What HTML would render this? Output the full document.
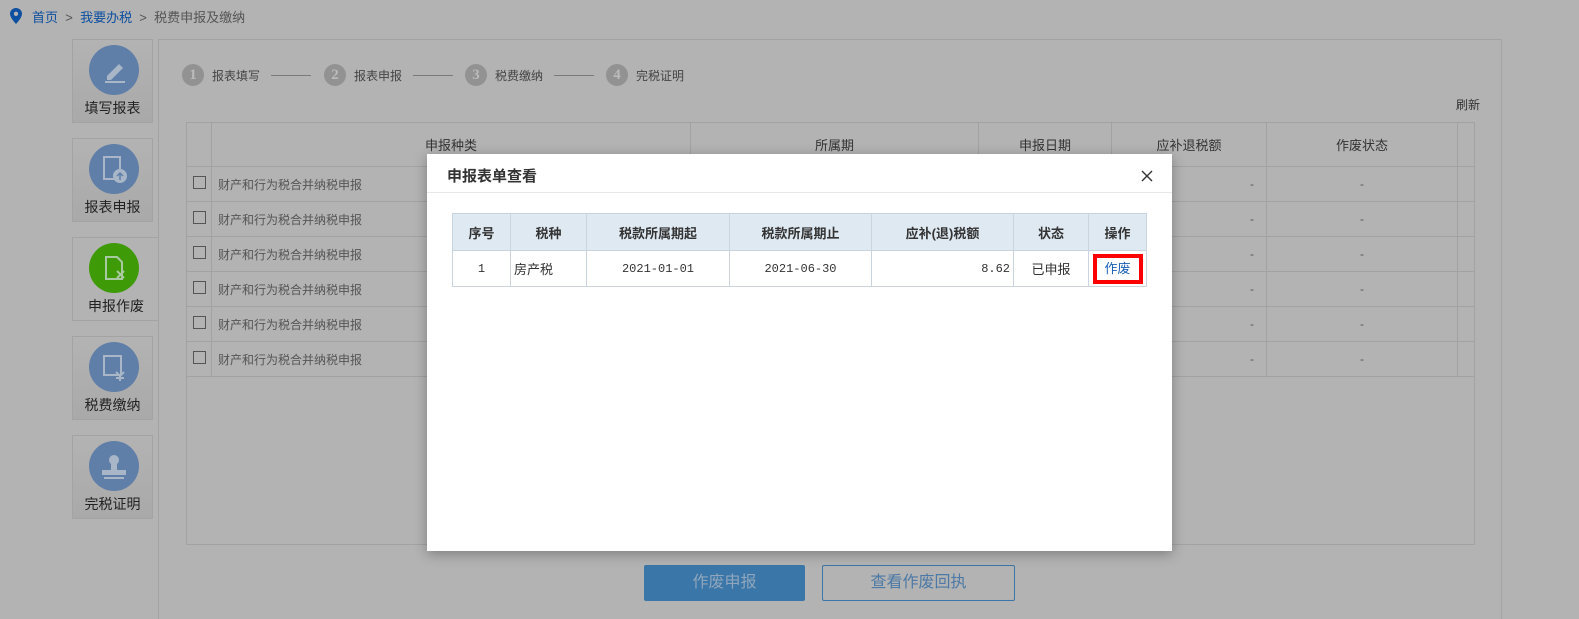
<!DOCTYPE html>
<html><head><meta charset="utf-8"><style>
*{box-sizing:border-box;margin:0;padding:0}
body{width:1579px;height:614px;background:#b3b3b3;font-family:"Liberation Sans","Noto Sans CJK SC",sans-serif;position:relative;overflow:hidden;color:#333}
.a{position:absolute}
.nav{position:absolute;left:72px;width:81px;height:84px;border:1px solid #a3a3a3;background:linear-gradient(#b3b3b3,#a9a9a9)}
.nav .c{position:absolute;left:16px;top:5px;width:50px;height:50px;border-radius:50%;background:#5f7fa8}
.nav .t{position:absolute;left:0;right:0;top:58px;text-align:center;font-size:14px;color:#222}
.tb{border-collapse:collapse;position:absolute}
.tb td{border:1px solid #a2a2a2;font-size:12px;color:#555}
.step{position:absolute;top:64px;width:22px;height:22px;border-radius:50%;background:#929292;color:#bbb;font:bold 15px "Liberation Serif",serif;text-align:center;line-height:22px}
.sl{position:absolute;top:75px;height:1px;background:#7a7a7a;width:40px}
.st{position:absolute;top:67px;font-size:12px;color:#444}
.m td{border:1px solid #c9d4df;font-size:12px;text-align:center;color:#333}
</style></head><body>
<svg class="a" style="left:10px;top:8px" width="12" height="16" viewBox="0 0 12 16"><path d="M6 0C2.7 0 0 2.6 0 5.8 0 10 6 16 6 16s6-6 6-10.2C12 2.6 9.3 0 6 0z" fill="#0d4fa0"/><circle cx="6" cy="5.8" r="2.2" fill="#b3b3b3"/></svg>
<div class="a" style="left:32px;top:7px;font-size:13px;color:#555"><span style="color:#0d4fa0">首页</span>&nbsp;&nbsp;&gt;&nbsp;&nbsp;<span style="color:#0d4fa0">我要办税</span>&nbsp;&nbsp;&gt;&nbsp;&nbsp;税费申报及缴纳</div>

<div class="nav" style="top:39px"><div class="c"><svg width="50" height="50"><path d="M18 31l12-12 4 4-12 12h-4z" fill="#a8b6c8"/><path d="M16 37h20" stroke="#a8b6c8" stroke-width="2"/></svg></div><div class="t">填写报表</div></div>
<div class="nav" style="top:138px"><div class="c"><svg width="50" height="50"><rect x="15" y="13" width="16" height="22" fill="none" stroke="#a8b6c8" stroke-width="2"/><circle cx="31" cy="32" r="7" fill="#a8b6c8"/><path d="M31 36v-7m-3 3l3-3 3 3" stroke="#5f7fa8" stroke-width="1.5" fill="none"/></svg></div><div class="t">报表申报</div></div>
<div class="nav" style="top:237px;width:87px;border-right:none;background:#b3b3b3"><div class="c" style="background:#3f9a08"><svg width="50" height="50"><path d="M17 14h11l5 5v17H17z" fill="none" stroke="#a9c9a0" stroke-width="2"/><path d="M28 28l7 7m0-7l-7 7" stroke="#a9c9a0" stroke-width="2"/></svg></div><div class="t">申报作废</div></div>
<div class="nav" style="top:336px"><div class="c"><svg width="50" height="50"><rect x="15" y="14" width="17" height="19" fill="none" stroke="#a8b6c8" stroke-width="2"/><path d="M27 30l4 4 4-4m-4 4v5m-4-3h8" stroke="#a8b6c8" stroke-width="2" fill="none"/></svg></div><div class="t">税费缴纳</div></div>
<div class="nav" style="top:435px"><div class="c"><svg width="50" height="50"><circle cx="25" cy="19" r="5" fill="#a8b6c8"/><rect x="22" y="23" width="6" height="6" fill="#a8b6c8"/><rect x="13" y="29" width="24" height="5" fill="#a8b6c8"/><rect x="15" y="36" width="20" height="2" fill="#a8b6c8"/></svg></div><div class="t">完税证明</div></div>

<div class="a" style="left:158px;top:39px;width:1344px;height:580px;border:1px solid #a3a3a3;border-bottom:none"></div>
<div class="step" style="left:182px">1</div><div class="st" style="left:212px">报表填写</div><div class="sl" style="left:271px"></div>
<div class="step" style="left:324px">2</div><div class="st" style="left:354px">报表申报</div><div class="sl" style="left:413px"></div>
<div class="step" style="left:465px">3</div><div class="st" style="left:495px">税费缴纳</div><div class="sl" style="left:554px"></div>
<div class="step" style="left:606px">4</div><div class="st" style="left:636px">完税证明</div>
<div class="a" style="left:1456px;top:96px;font-size:12px;color:#333">刷新</div>

<div class="a" style="left:186px;top:122px;width:1289px;height:423px;border:1px solid #a2a2a2"></div>
<table class="tb" style="left:186px;top:122px;width:1289px">
<tr style="height:44px"><td style="width:25px"></td><td style="width:479px;text-align:center;font-size:13px;color:#333">申报种类</td><td style="width:288px;text-align:center;font-size:13px;color:#333">所属期</td><td style="width:133px;text-align:center;font-size:13px;color:#333">申报日期</td><td style="width:155px;text-align:center;font-size:13px;color:#333">应补退税额</td><td style="width:191px;text-align:center;font-size:13px;color:#333">作废状态</td><td></td></tr>
<tr style="height:35px"><td style="text-align:center"><span style="display:inline-block;width:13px;height:13px;border:1px solid #555"></span></td><td style="padding-left:6px">财产和行为税合并纳税申报</td><td></td><td></td><td style="text-align:right;padding-right:12px">-</td><td style="text-align:center">-</td><td></td></tr>
<tr style="height:35px"><td style="text-align:center"><span style="display:inline-block;width:13px;height:13px;border:1px solid #555"></span></td><td style="padding-left:6px">财产和行为税合并纳税申报</td><td></td><td></td><td style="text-align:right;padding-right:12px">-</td><td style="text-align:center">-</td><td></td></tr>
<tr style="height:35px"><td style="text-align:center"><span style="display:inline-block;width:13px;height:13px;border:1px solid #555"></span></td><td style="padding-left:6px">财产和行为税合并纳税申报</td><td></td><td></td><td style="text-align:right;padding-right:12px">-</td><td style="text-align:center">-</td><td></td></tr>
<tr style="height:35px"><td style="text-align:center"><span style="display:inline-block;width:13px;height:13px;border:1px solid #555"></span></td><td style="padding-left:6px">财产和行为税合并纳税申报</td><td></td><td></td><td style="text-align:right;padding-right:12px">-</td><td style="text-align:center">-</td><td></td></tr>
<tr style="height:35px"><td style="text-align:center"><span style="display:inline-block;width:13px;height:13px;border:1px solid #555"></span></td><td style="padding-left:6px">财产和行为税合并纳税申报</td><td></td><td></td><td style="text-align:right;padding-right:12px">-</td><td style="text-align:center">-</td><td></td></tr>
<tr style="height:35px"><td style="text-align:center"><span style="display:inline-block;width:13px;height:13px;border:1px solid #555"></span></td><td style="padding-left:6px">财产和行为税合并纳税申报</td><td></td><td></td><td style="text-align:right;padding-right:12px">-</td><td style="text-align:center">-</td><td></td></tr>
</table>

<div class="a" style="left:644px;top:565px;width:161px;height:36px;background:#3a76a8;border-radius:2px;color:#8fa6bc;font-size:16px;text-align:center;line-height:36px">作废申报</div>
<div class="a" style="left:822px;top:565px;width:193px;height:36px;border:1px solid #3a76a8;border-radius:2px;color:#4c79a6;font-size:16px;text-align:center;line-height:34px">查看作废回执</div>

<div class="a" style="left:427px;top:154px;width:745px;height:397px;background:#fff;box-shadow:0 3px 12px rgba(0,0,0,.3)">
<div class="a" style="left:0;top:0;width:745px;height:39px;border-bottom:1px solid #e8e8e8"></div>
<div class="a" style="left:20px;top:11px;font-size:15px;font-weight:bold;color:#333">申报表单查看</div>
<svg class="a" style="left:714px;top:16px" width="12" height="12"><path d="M1 1l10 10M11 1L1 11" stroke="#333" stroke-width="1.4"/></svg>
<table class="m" style="position:absolute;left:25px;top:59px;border-collapse:collapse;width:695px">
<tr style="height:37px;background:#dfe9f2;font-weight:bold"><td style="width:58px;font-weight:bold;font-size:13px">序号</td><td style="width:76px;font-weight:bold;font-size:13px">税种</td><td style="width:143px;font-weight:bold;font-size:13px">税款所属期起</td><td style="width:142px;font-weight:bold;font-size:13px">税款所属期止</td><td style="width:142px;font-weight:bold;font-size:13px">应补(退)税额</td><td style="width:75px;font-weight:bold;font-size:13px">状态</td><td style="font-weight:bold;font-size:13px">操作</td></tr>
<tr style="height:36px"><td style="font-family:'Liberation Mono',monospace">1</td><td style="text-align:left;padding-left:3px;font-size:13px">房产税</td><td style="font-family:'Liberation Mono',monospace">2021-01-01</td><td style="font-family:'Liberation Mono',monospace">2021-06-30</td><td style="text-align:right;padding-right:3px;font-family:'Liberation Mono',monospace">8.62</td><td style="font-size:13px">已申报</td><td><span style="display:inline-block;width:50px;height:30px;border:4px solid #f00;color:#1a5fb4;line-height:22px;font-size:13px">作废</span></td></tr>
</table>
</div>
</body></html>
